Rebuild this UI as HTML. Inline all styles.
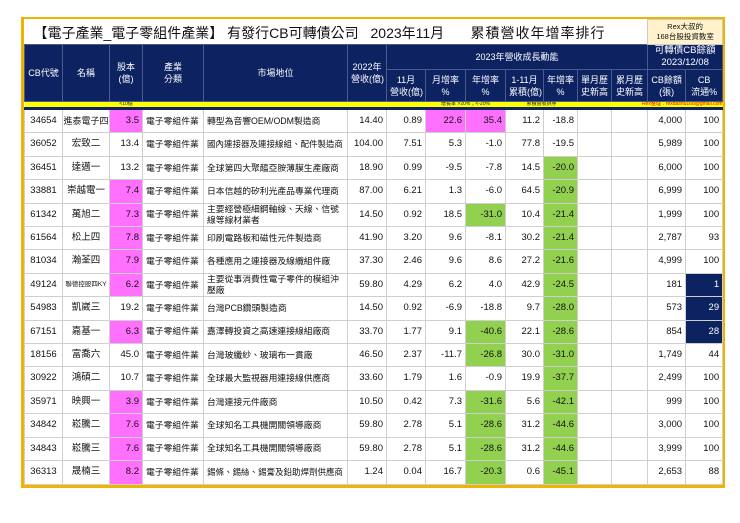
<!DOCTYPE html>
<html><head><meta charset="utf-8"><style>
body{margin:0;width:740px;height:523px;background:#fff;position:relative;overflow:hidden;font-family:"Liberation Sans","Noto Sans CJK TC",sans-serif;}
#frame{position:absolute;left:21px;top:17px;width:698px;border:3px solid #f0b400;border-top-width:2px;background:#fff;}
table{border-collapse:collapse;table-layout:fixed;width:698px;}
td{padding:0 3px;overflow:hidden;white-space:nowrap;font-size:9.5px;color:#111;}
.t td{height:24px;font-size:14px;padding:0;}
.h td{background:#0d2261;color:#fff;text-align:center;border:1px solid #4a5a8a;font-size:9px;line-height:12px;}
.y td{background:#ffff00;height:5px;font-size:5px;line-height:5px;border-bottom:3px solid #0d2261;padding:0;text-align:center;}
.d td{height:22.4px;line-height:22.4px;border:1px solid #cfcfcf;text-align:right;}
.d td.c{text-align:center}
.d td.l{text-align:left;font-size:8.8px;white-space:normal;line-height:11px}
.m{background:#ff70ff}
.g{background:#92d050}
.n{background:#0d2261;color:#fff!important}
.tt{position:relative;height:24px}
.tt span{position:absolute;top:3px;white-space:nowrap}
</style></head><body>
<div id="frame"><table>
<colgroup><col style="width:38px"><col style="width:47px"><col style="width:33px"><col style="width:61px"><col style="width:144px"><col style="width:39px"><col style="width:39px"><col style="width:40px"><col style="width:40px"><col style="width:38px"><col style="width:34px"><col style="width:34px"><col style="width:36px"><col style="width:38px"><col style="width:37px"></colgroup>
<tr class="t"><td colspan="13"><div class="tt"><span style="left:9px">【電子產業_電子零組件產業】 有發行CB可轉債公司</span><span style="left:346px">2023年11月</span><span style="left:446px;letter-spacing:1px">累積營收年增率排行</span></div></td><td colspan="2" style="background:#fff2cc;font-size:7.5px;text-align:center;line-height:10px;border:1px solid #ccc">Rex大叔的<br>168台股投資教室</td></tr>
<tr class="h" style="height:22px"><td rowspan="2">CB代號</td><td rowspan="2">名稱</td><td rowspan="2">股本<br>(億)</td><td rowspan="2">產業<br>分類</td><td rowspan="2">市場地位</td><td rowspan="2">2022年<br>營收(億)</td><td colspan="7">2023年營收成長動能</td><td colspan="2" style="font-size:9.5px">可轉債CB餘額<br>2023/12/08</td></tr>
<tr class="h" style="height:32px"><td>11月<br>營收(億)</td><td>月增率<br>%</td><td>年增率<br>%</td><td>1-11月<br>累積(億)</td><td>年增率<br>%</td><td>單月歷<br>史新高</td><td>累月歷<br>史新高</td><td>CB餘額<br>(張)</td><td>CB<br>流通%</td></tr>
<tr class="y"><td></td><td></td><td>&lt;10億</td><td></td><td></td><td></td><td></td><td colspan="2">增長率 &gt;20%；&lt;-20%</td><td colspan="2">累積營收排序</td><td></td><td colspan="3" style="color:#e00000;text-align:right">Rex整理：rexdashu168@gmail.com</td></tr>
<tr class="d"><td class="c">34654</td><td class="c" style="font-size:9px;padding:0">進泰電子四</td><td class="m">3.5</td><td class="l">電子零組件業</td><td class="l">轉型為音響OEM/ODM製造商</td><td>14.40</td><td>0.89</td><td class="m">22.6</td><td class="m">35.4</td><td>11.2</td><td>-18.8</td><td></td><td></td><td>4,000</td><td>100</td></tr>
<tr class="d"><td class="c">36052</td><td class="c">宏致二</td><td>13.4</td><td class="l">電子零組件業</td><td class="l" style="white-space:nowrap;font-size:8.5px">國內連接器及連接線組、配件製造商</td><td>104.00</td><td>7.51</td><td>5.3</td><td>-1.0</td><td>77.8</td><td>-19.5</td><td></td><td></td><td>5,989</td><td>100</td></tr>
<tr class="d"><td class="c">36451</td><td class="c">達邁一</td><td>13.2</td><td class="l">電子零組件業</td><td class="l">全球第四大聚醯亞胺薄膜生產廠商</td><td>18.90</td><td>0.99</td><td>-9.5</td><td>-7.8</td><td>14.5</td><td class="g">-20.0</td><td></td><td></td><td>6,000</td><td>100</td></tr>
<tr class="d"><td class="c">33881</td><td class="c">崇越電一</td><td class="m">7.4</td><td class="l">電子零組件業</td><td class="l">日本信越的矽利光產品專業代理商</td><td>87.00</td><td>6.21</td><td>1.3</td><td>-6.0</td><td>64.5</td><td class="g">-20.9</td><td></td><td></td><td>6,999</td><td>100</td></tr>
<tr class="d"><td class="c">61342</td><td class="c">萬旭二</td><td class="m">7.3</td><td class="l">電子零組件業</td><td class="l">主要經營極細鋼軸線、天線、信號線等線材業者</td><td>14.50</td><td>0.92</td><td>18.5</td><td class="g">-31.0</td><td>10.4</td><td class="g">-21.4</td><td></td><td></td><td>1,999</td><td>100</td></tr>
<tr class="d"><td class="c">61564</td><td class="c">松上四</td><td class="m">7.8</td><td class="l">電子零組件業</td><td class="l">印刷電路板和磁性元件製造商</td><td>41.90</td><td>3.20</td><td>9.6</td><td>-8.1</td><td>30.2</td><td class="g">-21.4</td><td></td><td></td><td>2,787</td><td>93</td></tr>
<tr class="d"><td class="c">81034</td><td class="c">瀚荃四</td><td class="m">7.9</td><td class="l">電子零組件業</td><td class="l">各種應用之連接器及線纜組件廠</td><td>37.30</td><td>2.46</td><td>9.6</td><td>8.6</td><td>27.2</td><td class="g">-21.6</td><td></td><td></td><td>4,999</td><td>100</td></tr>
<tr class="d"><td class="c" >49124</td><td class="c" style="font-size:6.5px;padding:0">聯德控股四KY</td><td class="m">6.2</td><td class="l">電子零組件業</td><td class="l">主要從事消費性電子零件的模組沖壓廠</td><td>59.80</td><td>4.29</td><td>6.2</td><td>4.0</td><td>42.9</td><td class="g">-24.5</td><td></td><td></td><td>181</td><td class="n">1</td></tr>
<tr class="d"><td class="c">54983</td><td class="c">凱崴三</td><td>19.2</td><td class="l">電子零組件業</td><td class="l">台灣PCB鑽頭製造商</td><td>14.50</td><td>0.92</td><td>-6.9</td><td>-18.8</td><td>9.7</td><td class="g">-28.0</td><td></td><td></td><td>573</td><td class="n">29</td></tr>
<tr class="d"><td class="c">67151</td><td class="c">嘉基一</td><td class="m">6.3</td><td class="l">電子零組件業</td><td class="l">嘉澤轉投資之高速連接線組廠商</td><td>33.70</td><td>1.77</td><td>9.1</td><td class="g">-40.6</td><td>22.1</td><td class="g">-28.6</td><td></td><td></td><td>854</td><td class="n">28</td></tr>
<tr class="d"><td class="c">18156</td><td class="c">富喬六</td><td>45.0</td><td class="l">電子零組件業</td><td class="l">台灣玻纖紗、玻璃布一貫廠</td><td>46.50</td><td>2.37</td><td>-11.7</td><td class="g">-26.8</td><td>30.0</td><td class="g">-31.0</td><td></td><td></td><td>1,749</td><td>44</td></tr>
<tr class="d"><td class="c">30922</td><td class="c">鴻碩二</td><td>10.7</td><td class="l">電子零組件業</td><td class="l">全球最大監視器用連接線供應商</td><td>33.60</td><td>1.79</td><td>1.6</td><td>-0.9</td><td>19.9</td><td class="g">-37.7</td><td></td><td></td><td>2,499</td><td>100</td></tr>
<tr class="d"><td class="c">35971</td><td class="c">映興一</td><td class="m">3.9</td><td class="l">電子零組件業</td><td class="l">台灣連接元件廠商</td><td>10.50</td><td>0.42</td><td>7.3</td><td class="g">-31.6</td><td>5.6</td><td class="g">-42.1</td><td></td><td></td><td>999</td><td>100</td></tr>
<tr class="d"><td class="c">34842</td><td class="c">崧騰二</td><td class="m">7.6</td><td class="l">電子零組件業</td><td class="l">全球知名工具機開關領導廠商</td><td>59.80</td><td>2.78</td><td>5.1</td><td class="g">-28.6</td><td>31.2</td><td class="g">-44.6</td><td></td><td></td><td>3,000</td><td>100</td></tr>
<tr class="d"><td class="c">34843</td><td class="c">崧騰三</td><td class="m">7.6</td><td class="l">電子零組件業</td><td class="l">全球知名工具機開關領導廠商</td><td>59.80</td><td>2.78</td><td>5.1</td><td class="g">-28.6</td><td>31.2</td><td class="g">-44.6</td><td></td><td></td><td>3,999</td><td>100</td></tr>
<tr class="d"><td class="c">36313</td><td class="c">晟楠三</td><td class="m">8.2</td><td class="l">電子零組件業</td><td class="l" style="white-space:nowrap;font-size:8.5px">錫條、錫絲、錫膏及鉛助焊劑供應商</td><td>1.24</td><td>0.04</td><td>16.7</td><td class="g">-20.3</td><td>0.6</td><td class="g">-45.1</td><td></td><td></td><td>2,653</td><td>88</td></tr>
</table></div>
</body></html>
